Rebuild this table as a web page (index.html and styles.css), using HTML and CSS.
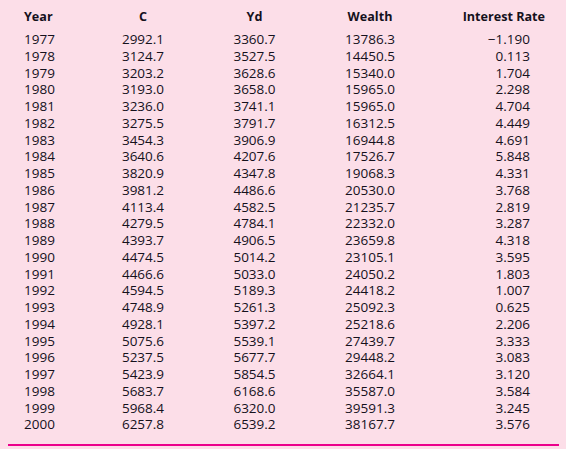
FILE: index.html
```html
<!DOCTYPE html>
<html>
<head>
<meta charset="utf-8">
<link rel="stylesheet" href="styles.css">
</head>
<body>
<div class="panel">
<table class="data">
<colgroup>
<col class="c-year"><col class="c-c"><col class="c-yd"><col class="c-w"><col class="c-ir">
</colgroup>
<thead>
<tr><th class="year">Year</th><th class="mid">C</th><th class="mid">Yd</th><th class="mid">Wealth</th><th class="ir">Interest Rate</th></tr>
</thead>
<tbody>
<tr><td class="year">1977</td><td class="mid">2992.1</td><td class="mid">3360.7</td><td class="mid">13786.3</td><td class="ir">&minus;1.190</td></tr>
<tr><td class="year">1978</td><td class="mid">3124.7</td><td class="mid">3527.5</td><td class="mid">14450.5</td><td class="ir">0.113</td></tr>
<tr><td class="year">1979</td><td class="mid">3203.2</td><td class="mid">3628.6</td><td class="mid">15340.0</td><td class="ir">1.704</td></tr>
<tr><td class="year">1980</td><td class="mid">3193.0</td><td class="mid">3658.0</td><td class="mid">15965.0</td><td class="ir">2.298</td></tr>
<tr><td class="year">1981</td><td class="mid">3236.0</td><td class="mid">3741.1</td><td class="mid">15965.0</td><td class="ir">4.704</td></tr>
<tr><td class="year">1982</td><td class="mid">3275.5</td><td class="mid">3791.7</td><td class="mid">16312.5</td><td class="ir">4.449</td></tr>
<tr><td class="year">1983</td><td class="mid">3454.3</td><td class="mid">3906.9</td><td class="mid">16944.8</td><td class="ir">4.691</td></tr>
<tr><td class="year">1984</td><td class="mid">3640.6</td><td class="mid">4207.6</td><td class="mid">17526.7</td><td class="ir">5.848</td></tr>
<tr><td class="year">1985</td><td class="mid">3820.9</td><td class="mid">4347.8</td><td class="mid">19068.3</td><td class="ir">4.331</td></tr>
<tr><td class="year">1986</td><td class="mid">3981.2</td><td class="mid">4486.6</td><td class="mid">20530.0</td><td class="ir">3.768</td></tr>
<tr><td class="year">1987</td><td class="mid">4113.4</td><td class="mid">4582.5</td><td class="mid">21235.7</td><td class="ir">2.819</td></tr>
<tr><td class="year">1988</td><td class="mid">4279.5</td><td class="mid">4784.1</td><td class="mid">22332.0</td><td class="ir">3.287</td></tr>
<tr><td class="year">1989</td><td class="mid">4393.7</td><td class="mid">4906.5</td><td class="mid">23659.8</td><td class="ir">4.318</td></tr>
<tr><td class="year">1990</td><td class="mid">4474.5</td><td class="mid">5014.2</td><td class="mid">23105.1</td><td class="ir">3.595</td></tr>
<tr><td class="year">1991</td><td class="mid">4466.6</td><td class="mid">5033.0</td><td class="mid">24050.2</td><td class="ir">1.803</td></tr>
<tr><td class="year">1992</td><td class="mid">4594.5</td><td class="mid">5189.3</td><td class="mid">24418.2</td><td class="ir">1.007</td></tr>
<tr><td class="year">1993</td><td class="mid">4748.9</td><td class="mid">5261.3</td><td class="mid">25092.3</td><td class="ir">0.625</td></tr>
<tr><td class="year">1994</td><td class="mid">4928.1</td><td class="mid">5397.2</td><td class="mid">25218.6</td><td class="ir">2.206</td></tr>
<tr><td class="year">1995</td><td class="mid">5075.6</td><td class="mid">5539.1</td><td class="mid">27439.7</td><td class="ir">3.333</td></tr>
<tr><td class="year">1996</td><td class="mid">5237.5</td><td class="mid">5677.7</td><td class="mid">29448.2</td><td class="ir">3.083</td></tr>
<tr><td class="year">1997</td><td class="mid">5423.9</td><td class="mid">5854.5</td><td class="mid">32664.1</td><td class="ir">3.120</td></tr>
<tr><td class="year">1998</td><td class="mid">5683.7</td><td class="mid">6168.6</td><td class="mid">35587.0</td><td class="ir">3.584</td></tr>
<tr><td class="year">1999</td><td class="mid">5968.4</td><td class="mid">6320.0</td><td class="mid">39591.3</td><td class="ir">3.245</td></tr>
<tr><td class="year">2000</td><td class="mid">6257.8</td><td class="mid">6539.2</td><td class="mid">38167.7</td><td class="ir">3.576</td></tr>
</tbody>
</table>
<div class="rule"></div>
</div>
</body>
</html>
```
FILE: styles.css
```css
html, body {
  margin: 0;
  padding: 0;
  background: #fcdee8;
}
body {
  width: 566px;
  height: 449px;
  overflow: hidden;
  font-family: "Open Sans", "Noto Sans", sans-serif;
  font-size: 13.5px;
  color: #15111c;
  font-variant-numeric: tabular-nums;
}
.panel {
  padding: 8px 0 0 0;
}
.data {
  border-collapse: collapse;
  table-layout: fixed;
  width: 545px;
}
.c-year { width: 100px; }
.c-c { width: 86px; }
.c-yd { width: 137px; }
.c-w { width: 94px; }
.c-ir { width: 128px; }
.data th, .data td {
  padding: 0;
  white-space: nowrap;
}
.data th {
  font-weight: 700;
  font-size: 12.6px;
  line-height: 17px;
  height: 17px;
  padding-bottom: 6px;
}
.data td {
  line-height: 16.75px;
  height: 16.75px;
}
.year { text-align: left; padding-left: 24px !important; }
.mid { text-align: center; }
th.ir { text-align: right; }
td.ir { text-align: right; padding-right: 15px !important; }
.rule {
  margin: 11px 7px 0 8px;
  height: 2px;
  background: #ec008c;
}
```
